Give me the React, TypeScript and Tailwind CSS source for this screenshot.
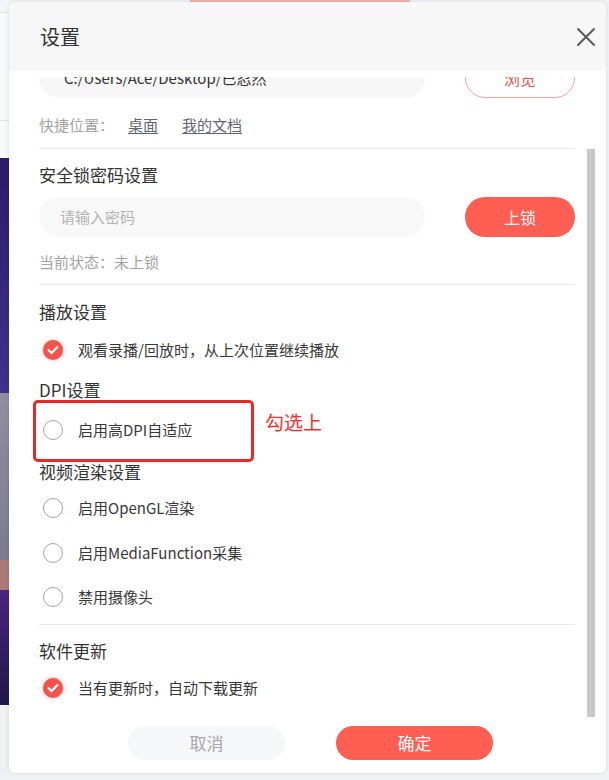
import React from "react";

const font = "font-['Noto_Sans_CJK_SC','Noto_Sans',sans-serif]";

function Checked() {
  return (
    <svg width="20" height="20" viewBox="0 0 20 20" className="shrink-0 drop-shadow-[0_0_2px_rgba(240,80,70,0.45)]">
      <circle cx="10" cy="10" r="10" fill="#f2544b" />
      <path d="M5.6 10.2 L8.7 13.1 L14.4 7.1" fill="none" stroke="#fff" strokeWidth="2.2" strokeLinecap="round" strokeLinejoin="round" />
    </svg>
  );
}

function Radio() {
  return <div className="h-5 w-5 shrink-0 rounded-full border-[1.5px] border-[#a3a3a3] bg-white" />;
}

function Option({ checked, label, className = "" }: { checked?: boolean; label: string; className?: string }) {
  return (
    <div className={`relative flex h-6 items-center pl-1 ${className}`}>
      {checked ? <Checked /> : <Radio />}
      <span className="ml-[15px] text-[15px] leading-6 text-[#383838]">{label}</span>
    </div>
  );
}

function Heading({ children, className = "" }: { children: React.ReactNode; className?: string }) {
  return <div className={`h-6 text-[17px] leading-6 text-[#333] ${className}`}>{children}</div>;
}

function Divider({ className = "" }: { className?: string }) {
  return <div className={`h-px w-full bg-[#e9e9e9] ${className}`} />;
}

export default function App() {
  return (
    <div className={`flex h-[780px] w-[609px] overflow-hidden bg-[#f1f2f5] ${font}`}>
      {/* app behind the dialog */}
      <div className="flex w-[9px] shrink-0 flex-col">
        <div className="h-[12px] bg-[#f4f5f8]" />
        <div className="h-px bg-[#e2e3e8]" />
        <div className="h-[107px] bg-[#f7f8fa]" />
        <div className="h-px bg-[#e2e3e8]" />
        <div className="h-[37px] bg-[#f7f8fa]" />
        <div className="h-[235px] bg-gradient-to-b from-[#2b1c6a] to-[#40318a]" />
        <div className="h-[167px] bg-gradient-to-b from-[#8e8fa2] to-[#7d7b90]" />
        <div className="h-[30px] bg-[#a97a78]" />
        <div className="h-[115px] bg-gradient-to-b from-[#4a2580] to-[#21174a]" />
        <div className="flex-1 bg-[#f0f1f4]" />
      </div>

      <div className="flex flex-1 flex-col">
        <div className="flex h-[2px]">
          <div className="ml-[181px] w-[220px] bg-[#f5b1ab]" />
        </div>

        <div className="flex h-[771px] w-[597px] flex-col overflow-hidden rounded-[6px] bg-white shadow-[0_0_4px_rgba(0,0,0,0.12)]">
          {/* header */}
          <div className="flex h-[69px] shrink-0 items-center justify-between bg-[#f7f7f7] pl-[31px] pr-[9px]">
            <span className="text-[20px] text-[#333]">设置</span>
            <svg width="22" height="22" viewBox="0 0 22 22">
              <path d="M3 3 L19 19 M19 3 L3 19" stroke="#5a5a5a" strokeWidth="2" strokeLinecap="round" />
            </svg>
          </div>

          {/* scrolling body */}
          <div className="flex h-[646px] shrink-0 pt-[6px]">
            <div className="w-[566px] overflow-hidden pl-[30px]">
              <div className="-mt-[19px] flex flex-col">
                <div className="flex h-10 items-center justify-between">
                  <div className="flex h-10 w-[386px] items-center rounded-full bg-[#f7f7f7] pl-[25px] text-[15px] text-[#333]">
                    C:/Users/Ace/Desktop/已忍然
                  </div>
                  <div className="flex h-10 w-[110px] items-center justify-center rounded-full border border-[#f3a29b] text-[16px] text-[#f2544b]">
                    浏览
                  </div>
                </div>

                <div className="mt-[15px] flex h-6 items-center text-[15px] leading-6">
                  <span className="text-[#a3a3a3]">快捷位置：</span>
                  <span className="ml-[14px] text-[#5f6670] underline underline-offset-2">桌面</span>
                  <span className="ml-[24px] text-[#5f6670] underline underline-offset-2">我的文档</span>
                </div>

                <Divider className="mt-[11px]" />

                <Heading className="mt-[14px]">安全锁密码设置</Heading>
                <div className="mt-[10px] flex h-10 items-center justify-between">
                  <div className="flex h-10 w-[386px] items-center rounded-full bg-[#f8f8f8] pl-[21px] text-[15px] text-[#b3b3b3]">
                    请输入密码
                  </div>
                  <div className="flex h-10 w-[110px] items-center justify-center rounded-full bg-[#ff5e52] text-[16px] text-white">
                    上锁
                  </div>
                </div>
                <div className="mt-[13px] h-6 text-[15px] leading-6 text-[#a3a3a3]">当前状态：未上锁</div>

                <Divider className="mt-[10px]" />

                <Heading className="mt-[15px]">播放设置</Heading>
                <Option checked label="观看录播/回放时，从上次位置继续播放" className="mt-[14px]" />

                <Heading className="mt-[16px]">DPI设置</Heading>
                <div className="relative mt-[16px]">
                  <Option label="启用高DPI自适应" />
                  <div className="absolute left-[-6px] top-[-18px] h-[62px] w-[221px] rounded-[5px] border-[3px] border-[#e8292a]" />
                  <span className="absolute left-[226px] top-[-8px] text-[19px] leading-6 text-[#ff2c2c]">勾选上</span>
                </div>

                <Heading className="mt-[18px]">视频渲染设置</Heading>
                <Option label="启用OpenGL渲染" className="mt-[12px]" />
                <Option label="启用MediaFunction采集" className="mt-[21px]" />
                <Option label="禁用摄像头" className="mt-[20px]" />

                <Divider className="mt-[15px]" />

                <Heading className="mt-[14px]">软件更新</Heading>
                <Option checked label="当有更新时，自动下载更新" className="mt-[13px]" />
              </div>
            </div>
            <div className="ml-[12px] w-2">
              <div className="mt-[72px] h-[568px] w-2 bg-[#c8c8c8]" />
            </div>
          </div>

          {/* footer */}
          <div className="flex gap-[51px] pl-[119px] pt-[9px]">
            <div className="flex h-[34px] w-[157px] items-center justify-center rounded-full bg-[#f6f7f9] text-[17px] text-[#a8a8a8]">
              取消
            </div>
            <div className="flex h-[34px] w-[157px] items-center justify-center rounded-full bg-[#ff5e52] text-[17px] text-white">
              确定
            </div>
          </div>
        </div>
      </div>
    </div>
  );
}
